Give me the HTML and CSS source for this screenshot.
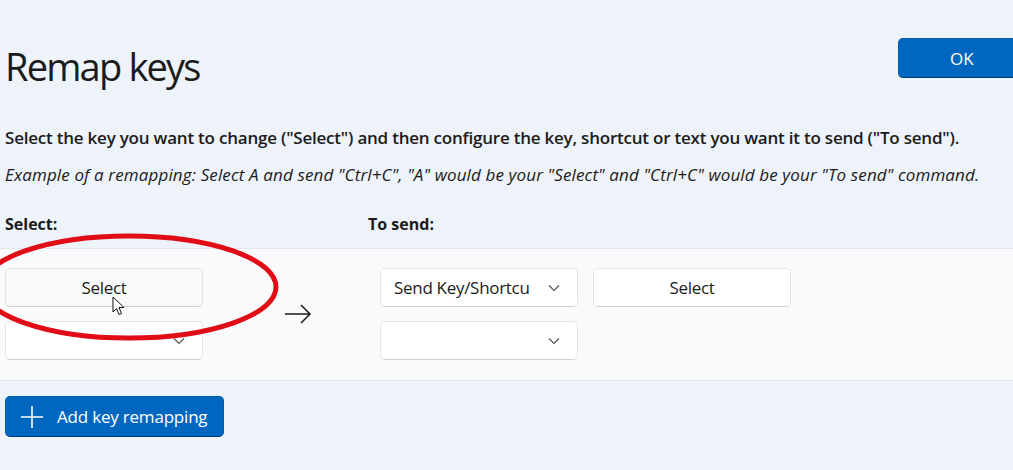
FILE: index.html
```html
<!DOCTYPE html>
<html>
<head>
<meta charset="utf-8">
<link rel="stylesheet" href="styles.css">
</head>
<body>
<div class="page">
  <header class="header">
    <h1 class="title">Remap keys</h1>
    <button class="btn-accent ok">OK</button>
  </header>
  <p class="desc">Select the key you want to change ("Select") and then configure the key, shortcut or text you want it to send ("To send").</p>
  <p class="example">Example of a remapping: Select A and send "Ctrl+C", "A" would be your "Select" and "Ctrl+C" would be your "To send" command.</p>
  <div class="labels">
    <span class="label label-select">Select:</span>
    <span class="label label-send">To send:</span>
  </div>
  <section class="panel">
    <div class="row">
      <div class="col col-left">
        <button class="btn select-btn">Select</button>
        <div class="combo"><span class="combo-text"></span><svg class="chev" viewBox="0 0 12 8" width="12" height="8"><path d="M1 1.5 L6 6.5 L11 1.5" fill="none" stroke="#555" stroke-width="1.2"/></svg></div>
      </div>
      <div class="arrow-col">
        <svg viewBox="0 0 28 20" width="28" height="20"><path d="M1 10 H26 M17 1 L26 10 L17 19" fill="none" stroke="#1b1b1b" stroke-width="1.5"/></svg>
      </div>
      <div class="col col-right">
        <div class="line">
          <div class="combo"><span class="combo-text">Send Key/Shortcu</span><svg class="chev" viewBox="0 0 12 8" width="12" height="8"><path d="M1 1.5 L6 6.5 L11 1.5" fill="none" stroke="#555" stroke-width="1.2"/></svg></div>
          <button class="btn white-btn">Select</button>
        </div>
        <div class="combo"><span class="combo-text"></span><svg class="chev" viewBox="0 0 12 8" width="12" height="8"><path d="M1 1.5 L6 6.5 L11 1.5" fill="none" stroke="#555" stroke-width="1.2"/></svg></div>
      </div>
    </div>
    <svg class="ring" viewBox="0 0 310 112" width="310" height="112"><ellipse cx="150" cy="56" rx="147" ry="51" fill="none" stroke="#e00c16" stroke-width="5"/></svg>
    <svg class="cursor" viewBox="0 0 14 20" width="14" height="20"><path d="M1 1 L1 16 L4.5 12.5 L7 18.5 L9.5 17.5 L7 11.5 L12 11.5 Z" fill="#fff" stroke="#111" stroke-width="1" stroke-linejoin="round"/></svg>
  </section>
  <div class="footer">
    <button class="btn-accent add"><svg viewBox="0 0 22 22" width="22" height="22"><path d="M11 0 V22 M0 11 H22" stroke="#fff" stroke-width="1.6"/></svg><span>Add key remapping</span></button>
  </div>
</div>
</body>
</html>
```

FILE: styles.css
```css
html, body {
  margin: 0;
  padding: 0;
}
body {
  background: #eef2f9;
  font-family: "Open Sans", "Noto Sans", sans-serif;
  color: #1b1b1b;
  width: 1013px;
  height: 470px;
  overflow: hidden;
}
.page {
  padding-left: 5px;
}
.header {
  display: flex;
  justify-content: space-between;
  align-items: flex-start;
  height: 108px;
}
.title {
  margin: 0;
  padding-top: 41px;
  font-size: 38px;
  font-weight: 400;
  line-height: 50px;
  letter-spacing: -1.8px;
}
.btn-accent {
  background: #0067c0;
  color: #fff;
  border: 1px solid #005ba8;
  border-bottom-color: #003e73;
  border-radius: 5px;
  font-family: inherit;
  font-size: 17px;
  cursor: default;
}
.ok {
  margin-top: 38px;
  width: 120px;
  height: 40px;
  margin-right: -5px;
  text-align: left;
  padding: 0 0 0 51px;
}
.desc {
  margin: 19px 0 0 0;
  font-size: 17px;
  font-weight: 600;
  line-height: 22px;
  letter-spacing: -0.22px;
}
.example {
  margin: 15px 0 0 0;
  font-size: 17px;
  font-style: italic;
  line-height: 22px;
  letter-spacing: 0.13px;
}
.labels {
  display: flex;
  margin-top: 27px;
  height: 22px;
  font-size: 16px;
  font-weight: 700;
  line-height: 22px;
}
.label-select {
  width: 363px;
}
.panel {
  position: relative;
  margin: 13px 0 0 -5px;
  background: #f9fafc;
  border-top: 1px solid #e3e6eb;
  border-bottom: 1px solid #e3e6eb;
  height: 131px;
}
.row {
  display: flex;
  padding: 19px 0 0 5px;
}
.col {
  display: flex;
  flex-direction: column;
  gap: 14px;
}
.line {
  display: flex;
  gap: 15px;
}
.arrow-col {
  width: 177px;
  display: flex;
  align-items: center;
  padding-left: 81px;
  box-sizing: border-box;
}
.btn, .combo {
  box-sizing: border-box;
  width: 198px;
  height: 39px;
  border: 1px solid #e5e5e5;
  border-bottom-color: #d0d0d0;
  border-radius: 5px;
  font-family: inherit;
  font-size: 17px;
  color: #1b1b1b;
  letter-spacing: -0.3px;
}
.btn {
  padding: 0;
  text-align: center;
}
.select-btn {
  background: #f8f9f9;
}
.white-btn {
  background: #ffffff;
}
.combo {
  background: #ffffff;
  display: flex;
  align-items: center;
  justify-content: space-between;
  padding: 0 17px 0 13px;
}
.chev {
  display: block;
}
.ring {
  position: absolute;
  left: -21px;
  top: -18px;
}
.cursor {
  position: absolute;
  left: 112px;
  top: 47px;
}
.footer {
  padding-top: 15px;
}
.add {
  display: flex;
  align-items: center;
  width: 219px;
  height: 41px;
  padding: 0 0 0 15px;
  gap: 14px;
  letter-spacing: -0.2px;
}
.add svg {
  display: block;
}
```
